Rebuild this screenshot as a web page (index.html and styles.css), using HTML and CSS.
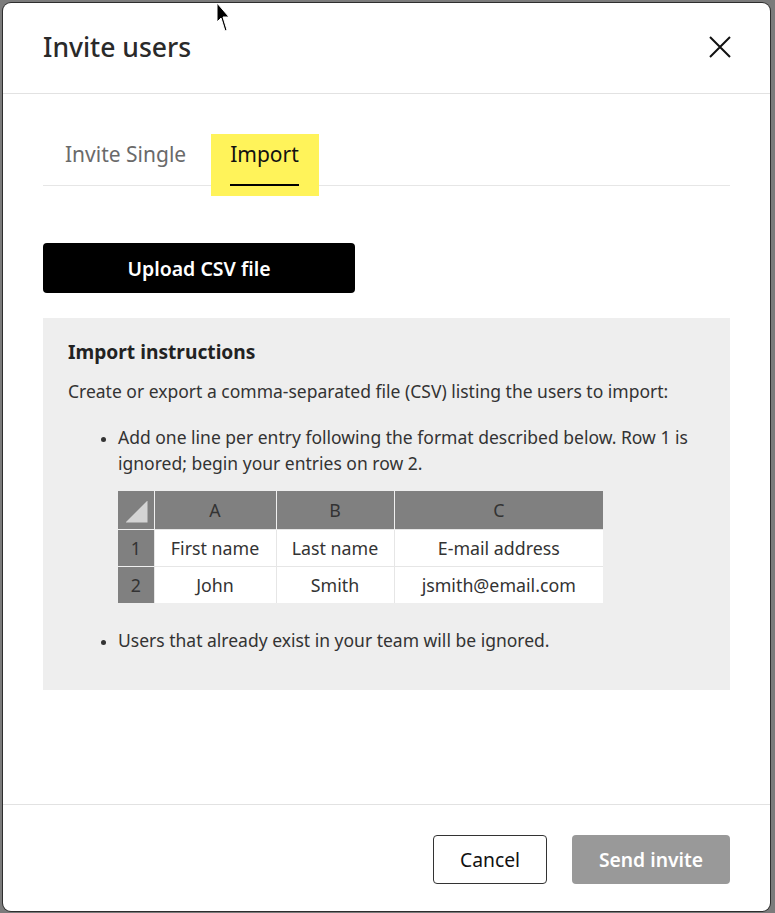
FILE: index.html
```html
<!DOCTYPE html>
<html lang="en">
<head>
<meta charset="utf-8">
<title>Invite users</title>
<link rel="stylesheet" href="styles.css">
</head>
<body>
<div class="modal">
  <header class="modal-header">
    <h1 class="modal-title">Invite users</h1>
    <button class="close-btn" aria-label="Close">
      <svg width="22" height="22" viewBox="0 0 22 22"><path d="M1 1L21 21M21 1L1 21" stroke="#111" stroke-width="2" fill="none"/></svg>
    </button>
  </header>
  <main class="modal-body">
    <nav class="tabs">
      <div class="tab"><span class="tab-label">Invite Single</span></div>
      <div class="tab tab-active"><span class="tab-label">Import</span></div>
    </nav>
    <button class="upload-btn">Upload CSV file</button>
    <section class="instructions">
      <h2 class="instr-title">Import instructions</h2>
      <p class="instr-text">Create or export a comma-separated file (CSV) listing the users to import:</p>
      <ul class="instr-list">
        <li>Add one line per entry following the format described below. Row 1 is ignored; begin your entries on row 2.
          <table class="sheet">
            <colgroup><col class="c0"><col class="c1"><col class="c2"><col class="c3"></colgroup>
            <thead>
              <tr><th class="corner"><span class="tri"></span></th><th>A</th><th>B</th><th>C</th></tr>
            </thead>
            <tbody>
              <tr><th class="rownum">1</th><td>First name</td><td>Last name</td><td>E-mail address</td></tr>
              <tr><th class="rownum">2</th><td>John</td><td>Smith</td><td>jsmith@email.com</td></tr>
            </tbody>
          </table>
        </li>
        <li class="last-item">Users that already exist in your team will be ignored.</li>
      </ul>
    </section>
  </main>
  <footer class="modal-footer">
    <button class="btn btn-cancel">Cancel</button>
    <button class="btn btn-send" disabled>Send invite</button>
  </footer>
</div>
<svg class="cursor" width="16" height="30" viewBox="0 0 16 30"><path d="M1 1L1 20L5 16L9 29L11 28L7 15L13 15Z" fill="#000" stroke="#fff" stroke-width="1"/></svg>
</body>
</html>
```

FILE: styles.css
```css
* { box-sizing: border-box; }
html, body { margin: 0; padding: 0; }
body {
  background: #7b7b7b;
  font-family: "Noto Sans", "Open Sans", Arial, sans-serif;
  color: #333;
  padding: 3px 0 0 3px;
  width: 775px;
  height: 913px;
  overflow: hidden;
  position: relative;
}
.modal {
  width: 767px;
  height: 908px;
  background: #fff;
  border-radius: 8px;
  box-shadow: 0 0 0 1px #2e2e2e;
  display: flex;
  flex-direction: column;
}
.modal-header {
  height: 91px;
  border-bottom: 1px solid #e2e2e2;
  display: flex;
  align-items: center;
  justify-content: space-between;
  padding: 0 39px 3px 40px;
}
.modal-title {
  margin: 0;
  font-size: 26.5px;
  font-weight: 500;
  color: #2a2a2a;
  letter-spacing: 0;
}
.close-btn {
  background: none;
  border: 0;
  padding: 0;
  width: 22px;
  height: 22px;
  display: flex;
}
.modal-body {
  flex: 1;
  padding: 0 40px;
}
.tabs {
  margin-top: 40px;
  display: flex;
  align-items: flex-start;
  border-bottom: 1px solid #e6e6e6;
  height: 52px;
}
.tab {
  padding: 0 22px;
  height: 52px;
  font-size: 21px;
  color: #6a6a6a;
}
.tab-label {
  display: block;
  line-height: 26px;
  padding: 7px 0 17px;
  border-bottom: 2px solid transparent;
}
.tab-active {
  background: #fff35a;
  color: #111;
  height: 62px;
  padding: 0 20px 0 19px;
  margin-left: 3px;
  position: relative;
}
.tab-active .tab-label { border-bottom-color: #000; }
.upload-btn {
  display: block;
  margin-top: 57px;
  width: 312px;
  height: 50px;
  background: #000;
  color: #fff;
  border: 0;
  border-radius: 4px;
  font-family: inherit;
  font-size: 19.5px;
  font-weight: 600;
}
.instructions {
  margin-top: 25px;
  background: #eeeeee;
  padding: 21px 25px 37px;
  height: 372px;
}
.instr-title {
  margin: 0;
  font-size: 19.2px;
  line-height: 26px;
  font-weight: 700;
  color: #222;
}
.instr-text {
  margin: 13px 0 0;
  font-size: 17.5px;
  line-height: 26px;
}
.instr-list {
  margin: 20px 0 0;
  padding-left: 50px;
  font-size: 17.5px;
  line-height: 26px;
}
.instr-list li::marker { font-size: 15px; }
.last-item { margin-top: 24px; }
.sheet {
  margin-top: 15px;
  border-collapse: collapse;
  table-layout: fixed;
  width: 485px;
  font-size: 17.8px;
  color: #333;
}
.c0 { width: 36px; }
.c1 { width: 122px; }
.c2 { width: 118px; }
.c3 { width: 209px; }
.sheet th, .sheet td {
  text-align: center;
  font-weight: 400;
  padding: 0;
  line-height: 24px;
}
.sheet thead th {
  background: #808080;
  height: 38px;
  border-left: 1px solid #f0f0f0;
}
.sheet thead th:first-child { border-left: 0; }
.sheet td {
  background: #fff;
  height: 37px;
  border-left: 1px solid #e6e6e6;
  border-top: 1px solid #e6e6e6;
}
.sheet .rownum {
  background: #808080;
  height: 37px;
  border-top: 1px solid #f0f0f0;
}
.corner { position: relative; }
.tri {
  position: absolute;
  right: 6px;
  bottom: 6px;
  width: 22px;
  height: 22px;
  background: #d4d4d4;
  clip-path: polygon(100% 0, 100% 100%, 0 100%);
}
.modal-footer {
  border-top: 1px solid #e2e2e2;
  display: flex;
  justify-content: flex-end;
  gap: 25px;
  padding: 30px 40px 27px;
}
.btn {
  height: 49px;
  border-radius: 4px;
  font-family: inherit;
  font-size: 19.3px;
}
.btn-cancel {
  width: 114px;
  background: #fff;
  border: 1px solid #333;
  color: #111;
}
.btn-send {
  width: 158px;
  background: #999;
  border: 0;
  color: #fff;
  font-weight: 600;
}
.cursor {
  position: absolute;
  left: 216px;
  top: 2px;
}
```
